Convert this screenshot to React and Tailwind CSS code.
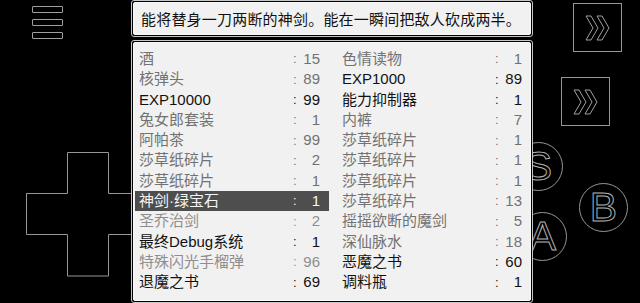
import React from 'react'

const leftItems = [
  { name: '酒', qty: 15, tone: 'gray' },
  { name: '核弹头', qty: 89, tone: 'gray' },
  { name: 'EXP10000', qty: 99, tone: 'dark' },
  { name: '兔女郎套装', qty: 1, tone: 'gray' },
  { name: '阿帕茶', qty: 99, tone: 'gray' },
  { name: '莎草纸碎片', qty: 2, tone: 'gray' },
  { name: '莎草纸碎片', qty: 1, tone: 'gray' },
  { name: '神剑·绿宝石', qty: 1, tone: 'selected' },
  { name: '圣乔治剑', qty: 2, tone: 'light' },
  { name: '最终Debug系统', qty: 1, tone: 'dark' },
  { name: '特殊闪光手榴弹', qty: 96, tone: 'light' },
  { name: '退魔之书', qty: 69, tone: 'dark' },
]

const rightItems = [
  { name: '色情读物', qty: 1, tone: 'gray' },
  { name: 'EXP1000', qty: 89, tone: 'dark' },
  { name: '能力抑制器', qty: 1, tone: 'dark' },
  { name: '内裤', qty: 7, tone: 'gray' },
  { name: '莎草纸碎片', qty: 1, tone: 'gray' },
  { name: '莎草纸碎片', qty: 1, tone: 'gray' },
  { name: '莎草纸碎片', qty: 1, tone: 'gray' },
  { name: '莎草纸碎片', qty: 13, tone: 'gray' },
  { name: '摇摇欲断的魔剑', qty: 5, tone: 'gray' },
  { name: '深仙脉水', qty: 18, tone: 'gray' },
  { name: '恶魔之书', qty: 60, tone: 'dark' },
  { name: '调料瓶', qty: 1, tone: 'dark' },
]

const toneClass = {
  dark: 'text-[#111]',
  gray: 'text-[#727272]',
  light: 'text-[#8e8e8e]',
  selected: 'text-[#f4f4f4] bg-[#4e4e4e]',
}

function Frame({ className, children }) {
  return (
    <div className={`rounded-[3px] border border-[#c8c8c8] bg-black p-px ${className}`}>
      <div className="h-full rounded-[2px] border border-[#fafafa] bg-[#f1f1f1]">
        {children}
      </div>
    </div>
  )
}

function ItemRow({ item, padRight }) {
  return (
    <div className={`flex h-[20.3px] items-center pl-[4px] ${padRight} ${toneClass[item.tone]}`}>
      <span className="flex-1 whitespace-nowrap">{item.name}</span>
      <span className="w-[6px] text-[13px]">:</span>
      <span className="w-[21px] text-right">{item.qty}</span>
    </div>
  )
}

function FastForward({ className }) {
  return (
    <div className={`absolute flex h-[49px] w-[49px] items-center justify-center border border-[#969696] ${className}`}>
      <svg width="26" height="26" viewBox="0 0 26 26" fill="none" stroke="#a0a0a0" strokeWidth="1">
        <polygon points="1,1 6,1 13,13 6,25 1,25 8,13" />
        <polygon points="12,1 17,1 24,13 17,25 12,25 19,13" />
      </svg>
    </div>
  )
}

function RoundButton({ label, className }) {
  return (
    <div className={`absolute flex h-[49px] w-[49px] items-center justify-center rounded-full border border-[#969696] ${className}`}>
      <span className="text-[41px] leading-none text-transparent [-webkit-text-stroke:1px_#b0b0b0]">
        {label}
      </span>
    </div>
  )
}

export default function App() {
  return (
    <div className="relative h-[303px] w-[640px] overflow-hidden bg-black font-['Liberation_Sans','Noto_Sans_CJK_SC',sans-serif]">
      {/* menu */}
      <div className="absolute left-[32px] top-[6px] flex flex-col gap-[6px]">
        <div className="h-[7px] w-[31px] rounded-[1px] border border-[#a0a0a0]" />
        <div className="h-[7px] w-[31px] rounded-[1px] border border-[#a0a0a0]" />
        <div className="h-[7px] w-[31px] rounded-[1px] border border-[#a0a0a0]" />
      </div>

      {/* d-pad */}
      <svg className="absolute left-[26px] top-[152px]" width="125" height="125" viewBox="0 0 125 125" fill="none" stroke="#969696" strokeWidth="1">
        <polygon points="41.5,0.5 82.5,0.5 82.5,41.5 123.5,41.5 123.5,82.5 82.5,82.5 82.5,124 41.5,124 41.5,82.5 0.5,82.5 0.5,41.5 41.5,41.5" />
      </svg>

      <FastForward className="left-[573px] top-[3px]" />
      <FastForward className="left-[561px] top-[77px]" />
      <RoundButton label="S" className="left-[514px] top-[142px]" />
      <RoundButton label="B" className="left-[579px] top-[183px]" />
      <RoundButton label="A" className="left-[518px] top-[212px]" />

      {/* game windows */}
      <div className="relative z-10 ml-[131px] flex w-[402px] flex-col gap-[3px]">
        <Frame className="h-[37px]">
          <div className="flex h-full items-center pl-[7px] pt-[4px] text-[15px] tracking-[0.2px] text-[#111]">
            能将替身一刀两断的神剑。能在一瞬间把敌人砍成两半。
          </div>
        </Frame>
        <Frame className="h-[263px]">
          <div className="grid grid-cols-[194px_190px] gap-x-[9px] pl-[1px] pt-[6px] text-[15px]">
            <div className="flex flex-col">
              {leftItems.map((item, i) => (
                <ItemRow key={i} item={item} padRight="pr-[9px]" />
              ))}
            </div>
            <div className="flex flex-col">
              {rightItems.map((item, i) => (
                <ItemRow key={i} item={item} padRight="pr-[6px]" />
              ))}
            </div>
          </div>
        </Frame>
      </div>
    </div>
  )
}
